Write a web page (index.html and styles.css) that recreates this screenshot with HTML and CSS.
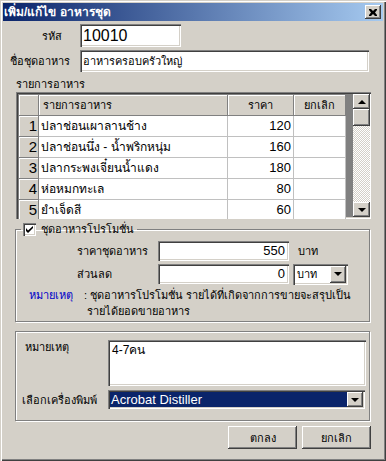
FILE: index.html
```html
<!DOCTYPE html>
<html lang="th">
<head>
    <meta charset="UTF-8">
    <title>เพิ่ม/แก้ไข อาหารชุด</title>
    <link rel="stylesheet" href="styles.css">
</head>
<body>
    <div class="window">
        <div class="titlebar">
            <span class="title">เพิ่ม/แก้ไข อาหารชุด</span>
            <span class="close-btn">
                <svg width="8" height="7" viewBox="0 0 8 7"><path d="M0 0h2l2 2 2-2h2v1L6 3.5 8 6v1H6L4 5 2 7H0V6l2-2.5L0 1z" fill="#000"/></svg>
            </span>
        </div>

        <div class="content">
            <div class="field-row row-code">
                <span class="lbl lbl-code">รหัส</span>
                <div class="textbox tb-code">10010</div>
            </div>
            <div class="field-row row-name">
                <span class="lbl lbl-name">ชื่อชุดอาหาร</span>
                <div class="textbox tb-name">อาหารครอบครัวใหญ่</div>
            </div>

            <div class="section-label">รายการอาหาร</div>
            <div class="grid-box">
                <table class="grid">
                    <colgroup>
                        <col class="c-num">
                        <col class="c-name">
                        <col class="c-price">
                        <col class="c-cancel">
                    </colgroup>
                    <tr class="head">
                        <th></th>
                        <th class="left">รายการอาหาร</th>
                        <th>ราคา</th>
                        <th>ยกเลิก</th>
                    </tr>
                    <tr><th class="num">1</th><td>ปลาช่อนเผาลานช้าง</td><td class="price">120</td><td></td></tr>
                    <tr><th class="num">2</th><td>ปลาช่อนนึ่ง - น้ำพริกหนุ่ม</td><td class="price">160</td><td></td></tr>
                    <tr><th class="num">3</th><td>ปลากระพงเจี๋ยนน้ำแดง</td><td class="price">180</td><td></td></tr>
                    <tr><th class="num">4</th><td>ห่อหมกทะเล</td><td class="price">80</td><td></td></tr>
                    <tr><th class="num">5</th><td>ยำเจ็ดสี</td><td class="price">60</td><td></td></tr>
                </table>
                <div class="grid-gap"></div>
                <div class="vscroll">
                    <span class="sbtn"><span class="arrow-up"></span></span>
                    <span class="thumb"></span>
                    <span class="track"></span>
                    <span class="sbtn"><span class="arrow-down"></span></span>
                </div>
            </div>

            <fieldset class="group promo">
                <legend class="legend">
                    <span class="check">
                        <svg width="7" height="7" viewBox="0 0 7 7"><path d="M0 2v3l2 2 5-5V0L2 4.5z" fill="#000"/></svg>
                    </span>
                    <span>ชุดอาหารโปรโมชั่น</span>
                </legend>
                <div class="promo-grid">
                    <span class="lbl">ราคาชุดอาหาร</span>
                    <div class="textbox tb-num">550</div>
                    <span class="unit">บาท</span>

                    <span class="lbl">ส่วนลด</span>
                    <div class="textbox tb-num">0</div>
                    <div class="combo combo-unit">
                        <span class="combo-text">บาท</span>
                        <span class="drop-btn"><span class="arrow-down"></span></span>
                    </div>
                </div>
                <div class="remark">
                    <span class="remark-title">หมายเหตุ</span>
                    <span class="remark-text">: ชุดอาหารโปรโมชั่น รายได้ที่เกิดจากการขายจะสรุปเป็น<br><span class="indent">รายได้ยอดขายอาหาร</span></span>
                </div>
            </fieldset>

            <fieldset class="group notes">
                <div class="notes-grid">
                    <span class="lbl lbl-note">หมายเหตุ</span>
                    <div class="textbox memo">4-7คน</div>
                    <span class="lbl">เลือกเครื่องพิมพ์</span>
                    <div class="combo combo-printer">
                        <span class="combo-text selected">Acrobat Distiller</span>
                        <span class="drop-btn"><span class="arrow-down"></span></span>
                    </div>
                </div>
            </fieldset>

            <div class="buttons">
                <button class="btn">ตกลง</button>
                <button class="btn">ยกเลิก</button>
            </div>
        </div>
    </div>
</body>
</html>
```

FILE: styles.css
```css
body {
    margin: 0;
    padding: 0;
    background: #d4d0c8;
    font-family: Tahoma, "Liberation Sans", sans-serif;
    font-size: 11px;
    line-height: 14px;
    color: #000;
}

.window {
    width: 386px;
    height: 461px;
    box-sizing: border-box;
    padding: 3px;
    overflow: hidden;
    background: #d4d0c8;
    box-shadow: inset 1px 1px #d4d0c8, inset 2px 2px #fff, inset -1px -1px #404040, inset -2px -2px #808080;
}

.titlebar {
    height: 18px;
    display: flex;
    align-items: center;
    justify-content: space-between;
    padding: 0 2px 0 1px;
    background: linear-gradient(90deg, #0a246a, #a6caf0);
}

.title {
    color: #fff;
    font-weight: bold;
    font-size: 12px;
    white-space: nowrap;
}

.close-btn {
    width: 16px;
    height: 14px;
    box-sizing: border-box;
    display: flex;
    align-items: center;
    justify-content: center;
    background: #d4d0c8;
    box-shadow: inset -1px -1px #404040, inset 1px 1px #fff, inset -2px -2px #808080;
}

.lbl {
    white-space: nowrap;
}

/* text fields */
.textbox {
    box-sizing: border-box;
    background: #fff;
    padding: 2px 3px;
    box-shadow: inset 1px 1px #808080, inset 2px 2px #404040, inset -1px -1px #fff, inset -2px -2px #d4d0c8;
    white-space: nowrap;
    overflow: hidden;
}

.field-row {
    display: flex;
    align-items: center;
}

.row-code {
    margin-top: 3px;
}

.row-name {
    margin-top: 3px;
}

.lbl-code {
    width: 59px;
    text-align: right;
}

.lbl-name {
    width: 69px;
    padding-left: 7px;
    box-sizing: border-box;
}

.tb-code {
    margin-left: 18px;
    width: 101px;
    height: 23px;
    font-size: 16px;
    line-height: 19px;
}

.tb-name {
    margin-left: 8px;
    width: 289px;
    height: 22px;
    line-height: 18px;
}

.section-label {
    margin: 5px 0 0 13px;
    height: 15px;
    line-height: 15px;
}

/* data grid */
.grid-box {
    margin: 0 0 0 13px;
    width: 355px;
    height: 127px;
    box-sizing: border-box;
    padding: 2px;
    display: flex;
    overflow: hidden;
    background: #808080;
    box-shadow: inset 1px 1px #808080, inset 2px 2px #404040, inset -1px -1px #fff, inset -2px -2px #d4d0c8;
}

.grid {
    border-collapse: collapse;
    table-layout: fixed;
    width: 327px;
    height: 123px;
    background: #fff;
    font-size: 12px;
    line-height: 16px;
}

.c-num { width: 20px; }
.c-name { width: 189px; }
.c-price { width: 66px; }
.c-cancel { width: 52px; }

.grid td,
.grid th {
    height: 20px;
    padding: 0 2px;
    border: 1px solid #c0c0c0;
    white-space: nowrap;
    overflow: hidden;
    font-weight: normal;
}

.grid th {
    background: #d4d0c8;
    border-color: #808080;
    box-shadow: inset 1px 1px #fff;
}

.grid .head th {
    text-align: center;
    font-size: 11px;
}

.grid .head th.left {
    text-align: left;
    padding-left: 4px;
}

.grid th.num {
    text-align: right;
    font-size: 15px;
    padding-right: 1px;
}

.grid td.price {
    text-align: right;
    font-size: 13px;
}

.grid-gap {
    width: 7px;
    flex: none;
    background: #808080;
}

.vscroll {
    width: 17px;
    flex: none;
    display: flex;
    flex-direction: column;
    background: repeating-conic-gradient(#fff 0 25%, #d4d0c8 0 50%) 0 0 / 2px 2px;
}

.sbtn,
.thumb,
.drop-btn {
    box-sizing: border-box;
    background: #d4d0c8;
    box-shadow: inset -1px -1px #404040, inset 1px 1px #fff, inset -2px -2px #808080;
    display: flex;
    align-items: center;
    justify-content: center;
}

.sbtn {
    height: 15px;
}

.thumb {
    height: 17px;
}

.track {
    flex: 1;
}

.arrow-up,
.arrow-down {
    width: 0;
    height: 0;
    border-left: 4px solid transparent;
    border-right: 4px solid transparent;
}

.arrow-up {
    border-bottom: 4px solid #000;
}

.arrow-down {
    border-top: 4px solid #000;
}

/* group boxes */
.group {
    margin: 0 0 0 12px;
    width: 355px;
    box-sizing: border-box;
    border: 1px solid #808080;
    box-shadow: inset 1px 1px #fff, 1px 1px #fff;
    padding: 0;
    min-width: 0;
}

.promo {
    margin-top: 3px;
    height: 100px;
}

.legend {
    margin-left: 5px;
    padding: 0 3px 0 2px;
    display: flex;
    align-items: center;
    gap: 5px;
    height: 14px;
}

.check {
    width: 13px;
    height: 13px;
    box-sizing: border-box;
    background: #fff;
    display: flex;
    align-items: center;
    justify-content: center;
    box-shadow: inset 1px 1px #808080, inset 2px 2px #404040, inset -1px -1px #fff, inset -2px -2px #d4d0c8;
}

.promo-grid {
    display: grid;
    grid-template-columns: 81px 131px auto;
    grid-auto-rows: 20px;
    row-gap: 3px;
    align-items: center;
    margin: 5px 0 0 61px;
}

.tb-num {
    height: 20px;
    text-align: right;
    font-size: 13px;
    line-height: 16px;
    padding: 2px 4px;
}

.unit {
    padding-left: 9px;
}

.combo {
    box-sizing: border-box;
    display: flex;
    background: #fff;
    padding: 2px;
    box-shadow: inset 1px 1px #808080, inset 2px 2px #404040, inset -1px -1px #fff, inset -2px -2px #d4d0c8;
}

.combo-unit {
    margin-left: 4px;
    width: 55px;
    height: 21px;
}

.combo-text {
    flex: 1;
    padding-left: 2px;
    line-height: 17px;
}

.drop-btn {
    width: 16px;
}

.remark {
    display: flex;
    margin: 3px 0 0 13px;
    line-height: 16px;
    white-space: nowrap;
}

.remark-title {
    color: #0000c8;
    width: 55px;
}

.indent {
    padding-left: 3px;
}

.notes {
    margin-top: 9px;
    height: 90px;
}

.notes-grid {
    display: grid;
    grid-template-columns: 86px 258px;
    align-items: center;
    row-gap: 4px;
    padding: 8px 0 0 6px;
}

.lbl-note {
    align-self: start;
    padding: 0 0 0 3px;
}

.memo {
    height: 46px;
    padding: 3px 4px;
    font-size: 12px;
}

.combo-printer {
    width: 257px;
    height: 19px;
}

.combo-printer .combo-text {
    font-size: 13px;
    padding-left: 1px;
    line-height: 15px;
}

.selected {
    background: #0a246a;
    color: #fff;
}

/* buttons */
.buttons {
    display: flex;
    justify-content: flex-end;
    gap: 5px;
    margin: 5px 12px 0 0;
}

.btn {
    width: 69px;
    height: 23px;
    padding: 0;
    border: none;
    background: #d4d0c8;
    font-family: inherit;
    font-size: 11px;
    box-shadow: inset -1px -1px #404040, inset 1px 1px #fff, inset -2px -2px #808080;
}
```
